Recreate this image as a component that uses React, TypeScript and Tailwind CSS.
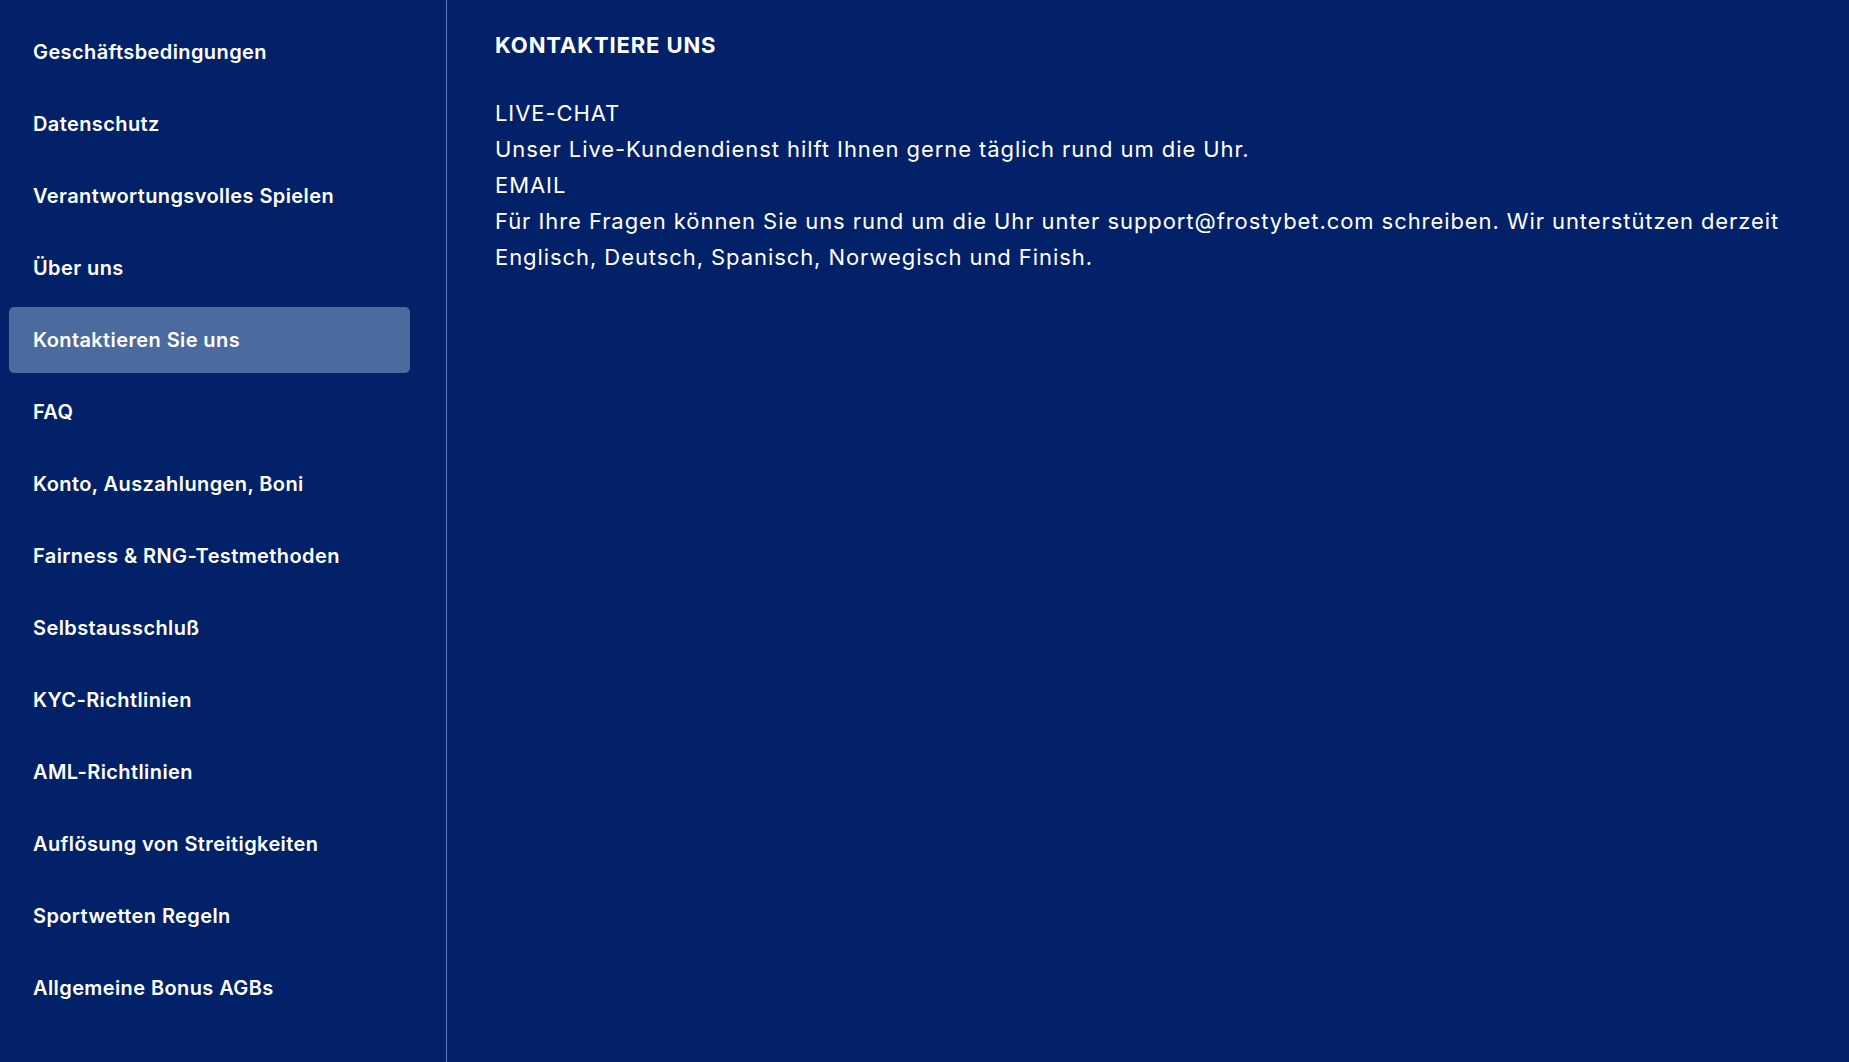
const links = [
  'Geschäftsbedingungen',
  'Datenschutz',
  'Verantwortungsvolles Spielen',
  'Über uns',
  'Kontaktieren Sie uns',
  'FAQ',
  'Konto, Auszahlungen, Boni',
  'Fairness & RNG-Testmethoden',
  'Selbstausschluß',
  'KYC-Richtlinien',
  'AML-Richtlinien',
  'Auflösung von Streitigkeiten',
  'Sportwetten Regeln',
  'Allgemeine Bonus AGBs',
]

const ACTIVE = 'Kontaktieren Sie uns'

function SideNav() {
  return (
    <nav className="flex w-[447px] shrink-0 flex-col gap-[6px] border-r border-[#5a7cc4] pt-[19px] pl-[9px]">
      {links.map((label) => (
        <a
          key={label}
          href="#"
          className={
            'flex h-[66px] w-[401px] items-center rounded-[5px] pl-[24px] text-[20px] font-semibold tracking-[0.02em] text-white ' +
            (label === ACTIVE ? 'bg-[#4b6a9e]' : '')
          }
        >
          {label}
        </a>
      ))}
    </nav>
  )
}

function ContactContent() {
  return (
    <main className="flex-1 pt-[30px] pl-[48px] pr-[48px] text-white">
      <h1 className="text-[22px] font-bold leading-[30px] tracking-[0.04em]">KONTAKTIERE UNS</h1>
      <div className="mt-[35px] text-[22px] leading-[36px] tracking-[0.042em]">
        <p>LIVE-CHAT</p>
        <p>Unser Live-Kundendienst hilft Ihnen gerne täglich rund um die Uhr.</p>
        <p>EMAIL</p>
        <p>
          Für Ihre Fragen können Sie uns rund um die Uhr unter support@frostybet.com schreiben. Wir
          unterstützen derzeit Englisch, Deutsch, Spanisch, Norwegisch und Finish.
        </p>
      </div>
    </main>
  )
}

export default function App() {
  return (
    <div className="flex min-h-[1062px] bg-[#032168] font-['Inter',sans-serif]">
      <SideNav />
      <ContactContent />
    </div>
  )
}
